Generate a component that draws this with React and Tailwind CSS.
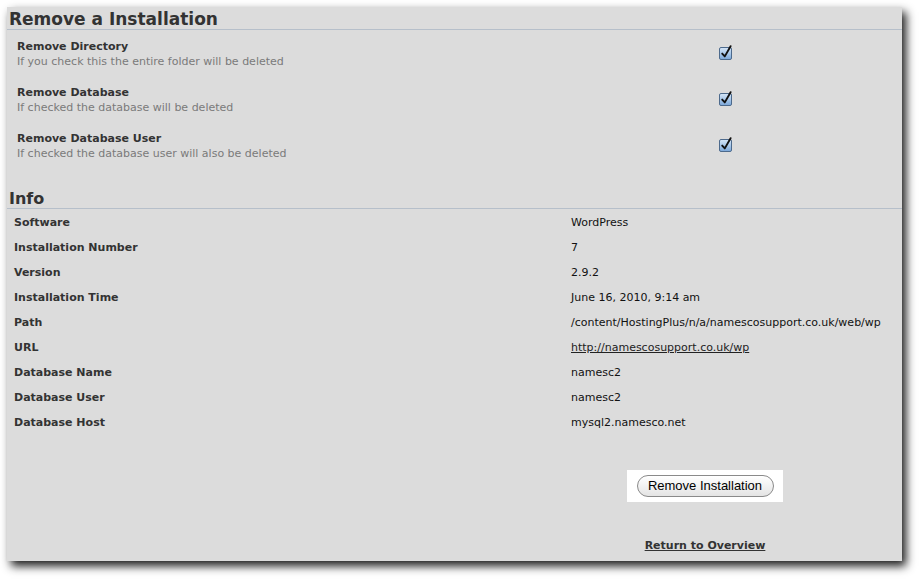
import React from "react";

const options = [
  { label: "Remove Directory", desc: "If you check this the entire folder will be deleted" },
  { label: "Remove Database", desc: "If checked the database will be deleted" },
  { label: "Remove Database User", desc: "If checked the database user will also be deleted" },
];

const info = [
  ["Software", "WordPress"],
  ["Installation Number", "7"],
  ["Version", "2.9.2"],
  ["Installation Time", "June 16, 2010, 9:14 am"],
  ["Path", "/content/HostingPlus/n/a/namescosupport.co.uk/web/wp"],
  ["URL", "http://namescosupport.co.uk/wp", true],
  ["Database Name", "namesc2"],
  ["Database User", "namesc2"],
  ["Database Host", "mysql2.namesco.net"],
];

function CheckedBox() {
  return (
    <svg width="16" height="17" viewBox="0 0 16 17">
      <defs>
        <linearGradient id="cbfill" x1="0" y1="0" x2="0" y2="1">
          <stop offset="0" stopColor="#d6e6f7" />
          <stop offset="0.5" stopColor="#a9c8ea" />
          <stop offset="1" stopColor="#7aa6d8" />
        </linearGradient>
      </defs>
      <rect x="1.5" y="3.5" width="12" height="12" rx="1.5" fill="url(#cbfill)" stroke="#4d6a8c" />
      <path d="M4.2 9.6 L6.8 12.4 L12.6 2.2" fill="none" stroke="#111" strokeWidth="1.9" strokeLinecap="round" strokeLinejoin="round" />
    </svg>
  );
}

export default function App() {
  return (
    <div className="min-h-screen bg-white pt-[7px] pl-[7px]" style={{ fontFamily: "'DejaVu Sans', Verdana, sans-serif" }}>
      <div className="w-[895px] h-[554px] bg-[#dcdcdc] shadow-[4px_5px_9px_rgba(0,0,0,0.9)]">
        {/* remove options */}
        <h1 className="h-[23px] pl-[2px] pt-[1px] border-b border-[#b6bfca] text-[17px] leading-[22px] font-bold text-[#333]">
          Remove a Installation
        </h1>
        <div className="pt-[9px]">
          {options.map((o) => (
            <div key={o.label} className="flex h-[46px] pl-[10px]">
              <div className="w-[700px]">
                <div className="text-[11px] leading-[15px] font-bold text-[#333]">{o.label}</div>
                <div className="text-[11px] leading-[15px] text-[#7a7a7a]">{o.desc}</div>
              </div>
              <div className="pt-[5px] ml-[1px]">
                <CheckedBox />
              </div>
            </div>
          ))}
        </div>

        {/* info */}
        <h2 className="mt-[11px] h-[21px] pl-[2px] border-b border-[#b6bfca] text-[16px] leading-[21px] font-bold text-[#333]">
          Info
        </h2>
        <div className="pl-[7px] pt-[2px]">
          {info.map(([k, v, link]) => (
            <div key={k} className="grid grid-cols-[557px_1fr] h-[25px] items-center text-[11px]">
              <div className="font-bold text-[#333]">{k}</div>
              <div className={link ? "text-[#222] underline" : "text-[#111]"}>{v}</div>
            </div>
          ))}
        </div>

        <div className="ml-[620px] w-[156px] mt-[34px] flex flex-col items-center">
          <div className="w-[156px] h-[32px] bg-white flex items-center justify-center">
            <button
              className="h-[22px] w-[137px] rounded-full border border-[#8a8a8a] bg-gradient-to-b from-white to-[#e4e4e4] text-[13px] text-black leading-[20px]"
              style={{ fontFamily: "'Liberation Sans', Arial, sans-serif" }}
            >
              Remove Installation
            </button>
          </div>
          <a className="mt-[36px] text-[11px] font-bold text-[#333] underline leading-[15px]">Return to Overview</a>
        </div>
      </div>
    </div>
  );
}
